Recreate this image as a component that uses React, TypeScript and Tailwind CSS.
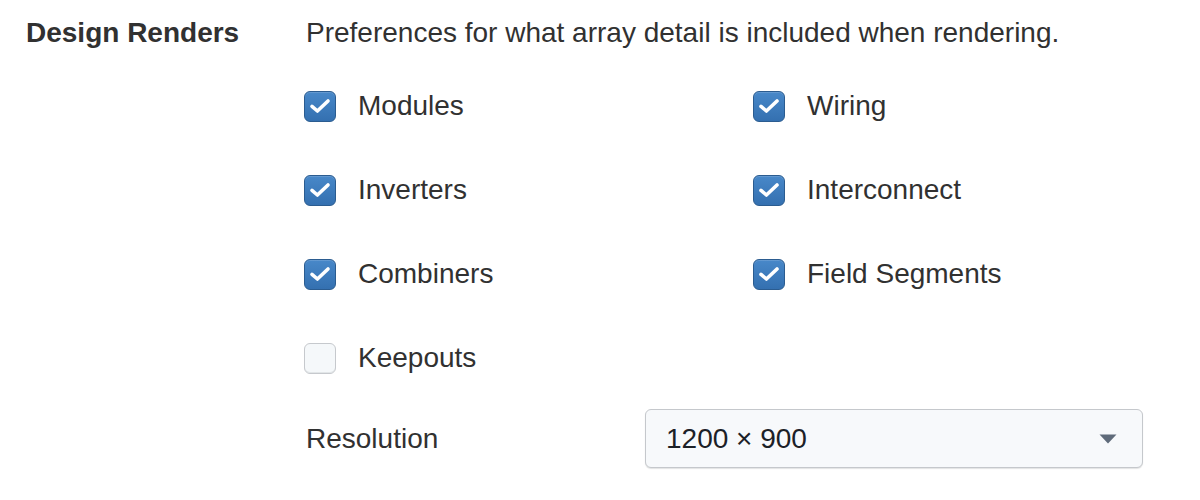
import React from 'react';

// ================================
// Data
// ================================

const renderOptions: { label: string; checked: boolean }[] = [
  { label: 'Modules', checked: true },
  { label: 'Wiring', checked: true },
  { label: 'Inverters', checked: true },
  { label: 'Interconnect', checked: true },
  { label: 'Combiners', checked: true },
  { label: 'Field Segments', checked: true },
  { label: 'Keepouts', checked: false },
];

// ================================
// Checkbox
// ================================

const Checkbox: React.FC<{ label: string; checked: boolean }> = ({ label, checked }) => {
  return (
    <label className="flex items-center h-[32px] gap-[22px] cursor-pointer">
      {checked ? (
        <span className="w-[32px] h-[31px] rounded-[6px] border border-[#2b5c90] bg-[linear-gradient(180deg,#4888c9,#3470b0)] shadow-[inset_0_1px_0_rgba(255,255,255,0.15)] flex items-center justify-center shrink-0">
          <svg width="22" height="18" viewBox="0 0 22 18" fill="none">
            <path
              d="M3 9.4L8.4 14L19 4"
              stroke="white"
              strokeWidth="3.6"
              strokeLinecap="round"
              strokeLinejoin="round"
            />
          </svg>
        </span>
      ) : (
        <span className="w-[32px] h-[31px] rounded-[6px] border border-[#c6c9cd] bg-[#f5f8fa] shadow-[inset_0_-1px_0_rgba(16,22,26,0.08)] shrink-0" />
      )}
      <span>{label}</span>
    </label>
  );
};

// ================================
// App
// ================================

export default function App() {
  return (
    <div className="w-[1200px] h-[500px] bg-white text-[#313131] text-[28px] leading-[32px] font-['Liberation_Sans',Arial,sans-serif] pt-[17px] pl-[26px] flex">
      {/* Section title */}
      <div className="w-[280px] font-bold">Design Renders</div>

      {/* Section body */}
      <div className="flex flex-col w-[838px]">
        <p>Preferences for what array detail is included when rendering.</p>

        <div className="grid grid-cols-[449px_1fr] gap-y-[52px] mt-[41px] -ml-[2px]">
          {renderOptions.map((opt) => (
            <Checkbox key={opt.label} label={opt.label} checked={opt.checked} />
          ))}
        </div>

        {/* Resolution */}
        <div className="flex items-center mt-[35px]">
          <span className="w-[339px]">Resolution</span>
          <div className="w-[498px] h-[59px] rounded-[6px] border border-[#c5c8cc] bg-[#f7f9fb] shadow-[0_1px_1px_rgba(16,22,26,0.12)] flex items-center justify-between pl-[20px] pr-[25px] text-[#1c2127]">
            <span>1200 × 900</span>
            <svg width="18" height="10" viewBox="0 0 18 10">
              <path d="M0.5 0.5H17.5L9 9.5Z" fill="#5f6b7a" />
            </svg>
          </div>
        </div>
      </div>
    </div>
  );
}
